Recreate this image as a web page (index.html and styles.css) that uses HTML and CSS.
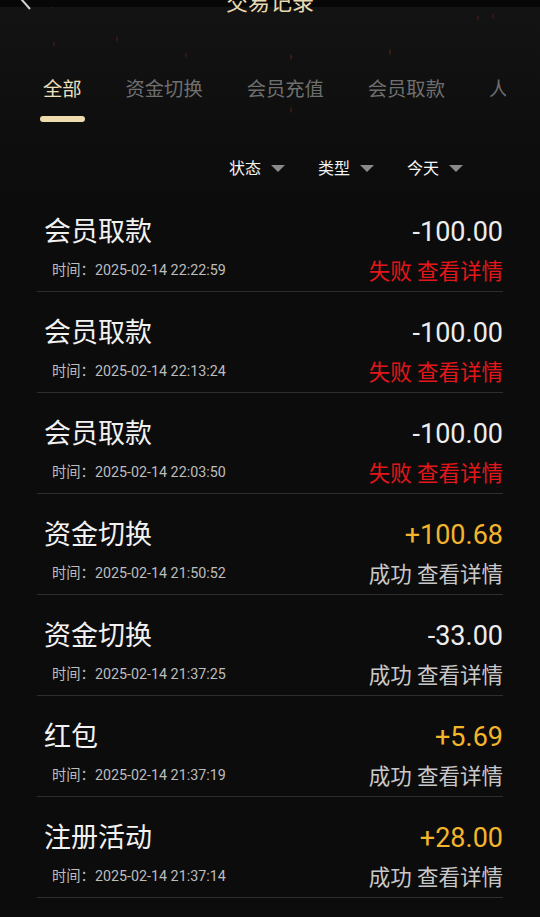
FILE: index.html
```html
<!DOCTYPE html>
<html lang="zh-CN">
<head>
    <meta charset="UTF-8">
    <meta name="viewport" content="width=device-width, initial-scale=1.0">
    <title>交易记录</title>
    <link rel="stylesheet" href="styles.css">
</head>
<body>
    <div class="header">
        <div class="nav">
            <span class="back">
                <svg width="12" height="20" viewBox="0 0 12 20"><path d="M10 1 L2 10 L10 19" fill="none" stroke="#cfcfcf" stroke-width="2"/></svg>
            </span>
            <h1>交易记录</h1>
            <span></span>
        </div>

        <div class="tabs">
            <div class="tab active">全部<i class="bar"></i></div>
            <div class="tab">资金切换</div>
            <div class="tab">会员充值</div>
            <div class="tab">会员取款</div>
            <div class="tab">人工加款</div>
        </div>

        <div class="filters">
            <div class="filter">状态<i class="caret"></i></div>
            <div class="filter">类型<i class="caret"></i></div>
            <div class="filter">今天<i class="caret"></i></div>
        </div>
    </div>

    <div class="list">
        <div class="item">
            <div class="row">
                <span class="name">会员取款</span>
                <span class="amount">-100.00</span>
            </div>
            <div class="row">
                <span class="time">时间：2025-02-14 22:22:59</span>
                <span class="status fail">失败 查看详情</span>
            </div>
        </div>
        <div class="item">
            <div class="row">
                <span class="name">会员取款</span>
                <span class="amount">-100.00</span>
            </div>
            <div class="row">
                <span class="time">时间：2025-02-14 22:13:24</span>
                <span class="status fail">失败 查看详情</span>
            </div>
        </div>
        <div class="item">
            <div class="row">
                <span class="name">会员取款</span>
                <span class="amount">-100.00</span>
            </div>
            <div class="row">
                <span class="time">时间：2025-02-14 22:03:50</span>
                <span class="status fail">失败 查看详情</span>
            </div>
        </div>
        <div class="item">
            <div class="row">
                <span class="name">资金切换</span>
                <span class="amount plus">+100.68</span>
            </div>
            <div class="row">
                <span class="time">时间：2025-02-14 21:50:52</span>
                <span class="status">成功 查看详情</span>
            </div>
        </div>
        <div class="item">
            <div class="row">
                <span class="name">资金切换</span>
                <span class="amount">-33.00</span>
            </div>
            <div class="row">
                <span class="time">时间：2025-02-14 21:37:25</span>
                <span class="status">成功 查看详情</span>
            </div>
        </div>
        <div class="item">
            <div class="row">
                <span class="name">红包</span>
                <span class="amount plus">+5.69</span>
            </div>
            <div class="row">
                <span class="time">时间：2025-02-14 21:37:19</span>
                <span class="status">成功 查看详情</span>
            </div>
        </div>
        <div class="item">
            <div class="row">
                <span class="name">注册活动</span>
                <span class="amount plus">+28.00</span>
            </div>
            <div class="row">
                <span class="time">时间：2025-02-14 21:37:14</span>
                <span class="status">成功 查看详情</span>
            </div>
        </div>
    </div>
</body>
</html>
```

FILE: styles.css
```css
body {
    font-family: Roboto, "Noto Sans CJK SC", sans-serif;
    margin: 0;
    padding: 0;
    background-color: #0c0c0c;
    color: #f2f2f2;
    overflow: hidden;
}

.header {
    background-color: #111;
    background-image:
        radial-gradient(1px 4px at 52px 26px, rgba(150, 40, 30, 0.6), transparent),
        radial-gradient(1px 4px at 117px 59px, rgba(150, 40, 30, 0.6), transparent),
        radial-gradient(1px 4px at 186px 75px, rgba(150, 40, 30, 0.5), transparent),
        radial-gradient(1px 4px at 291px 77px, rgba(170, 50, 30, 0.6), transparent),
        radial-gradient(1px 4px at 291px 130px, rgba(170, 50, 30, 0.6), transparent),
        radial-gradient(1px 4px at 390px 72px, rgba(170, 50, 30, 0.6), transparent),
        radial-gradient(1px 4px at 478px 38px, rgba(150, 40, 30, 0.5), transparent),
        radial-gradient(1px 4px at 493px 36px, rgba(150, 40, 30, 0.5), transparent),
        radial-gradient(1px 4px at 500px 108px, rgba(150, 40, 30, 0.5), transparent),
        radial-gradient(1px 4px at 54px 64px, rgba(150, 40, 30, 0.5), transparent),
        linear-gradient(#141414, #0c0c0c);
}

.nav {
    display: grid;
    grid-template-columns: 60px 1fr 60px;
    align-items: center;
    height: 40px;
    margin-top: -20px;
    background: linear-gradient(#070707 0, #070707 27px, transparent 27px);
}

.back {
    padding-left: 20px;
    display: flex;
}

h1 {
    margin: 0;
    font-size: 22px;
    font-weight: normal;
    text-align: center;
    color: #e6d9b2;
}

.tabs {
    display: flex;
    white-space: nowrap;
    overflow: hidden;
    padding: 58px 0 0 21px;
    margin-right: 34px;
    height: 44px;
}

.tab {
    position: relative;
    flex-shrink: 0;
    padding: 0 22px;
    font-size: 19.3px;
    line-height: 24px;
    color: #6f6f6f;
}

.tab.active {
    color: #efe1bd;
}

.bar {
    position: absolute;
    left: 50%;
    top: 38px;
    width: 45px;
    height: 6px;
    margin-left: -22px;
    border-radius: 3px;
    background: #efdcae;
}

.filters {
    display: flex;
    justify-content: flex-end;
    gap: 33px;
    padding: 35px 77px 14px 0;
}

.filter {
    display: flex;
    align-items: center;
    gap: 10px;
    height: 20px;
    font-size: 16px;
    color: #f4f4f4;
}

.caret {
    width: 0;
    height: 0;
    border-left: 7px solid transparent;
    border-right: 7px solid transparent;
    border-top: 7px solid #8a8a8a;
    margin-top: 2px;
}

.list {
    margin: 0 37px;
}

.item {
    padding: 26px 0 4px 0;
    border-bottom: 1px solid #2e2e2e;
}

.row {
    display: flex;
    justify-content: space-between;
    align-items: center;
    height: 30px;
    line-height: 30px;
}

.row + .row {
    margin-top: 10px;
}

.name {
    padding-left: 7px;
    font-size: 27px;
    color: #f2f2f2;
}

.amount {
    font-size: 27px;
    color: #ededed;
}

.amount.plus {
    color: #f3b52c;
}

.time {
    padding-left: 15px;
    margin-bottom: 4px;
    font-size: 14.3px;
    color: #bdbdbd;
}

.status {
    font-size: 21.5px;
    color: #c8c8c8;
}

.status.fail {
    color: #e3161a;
}
```
